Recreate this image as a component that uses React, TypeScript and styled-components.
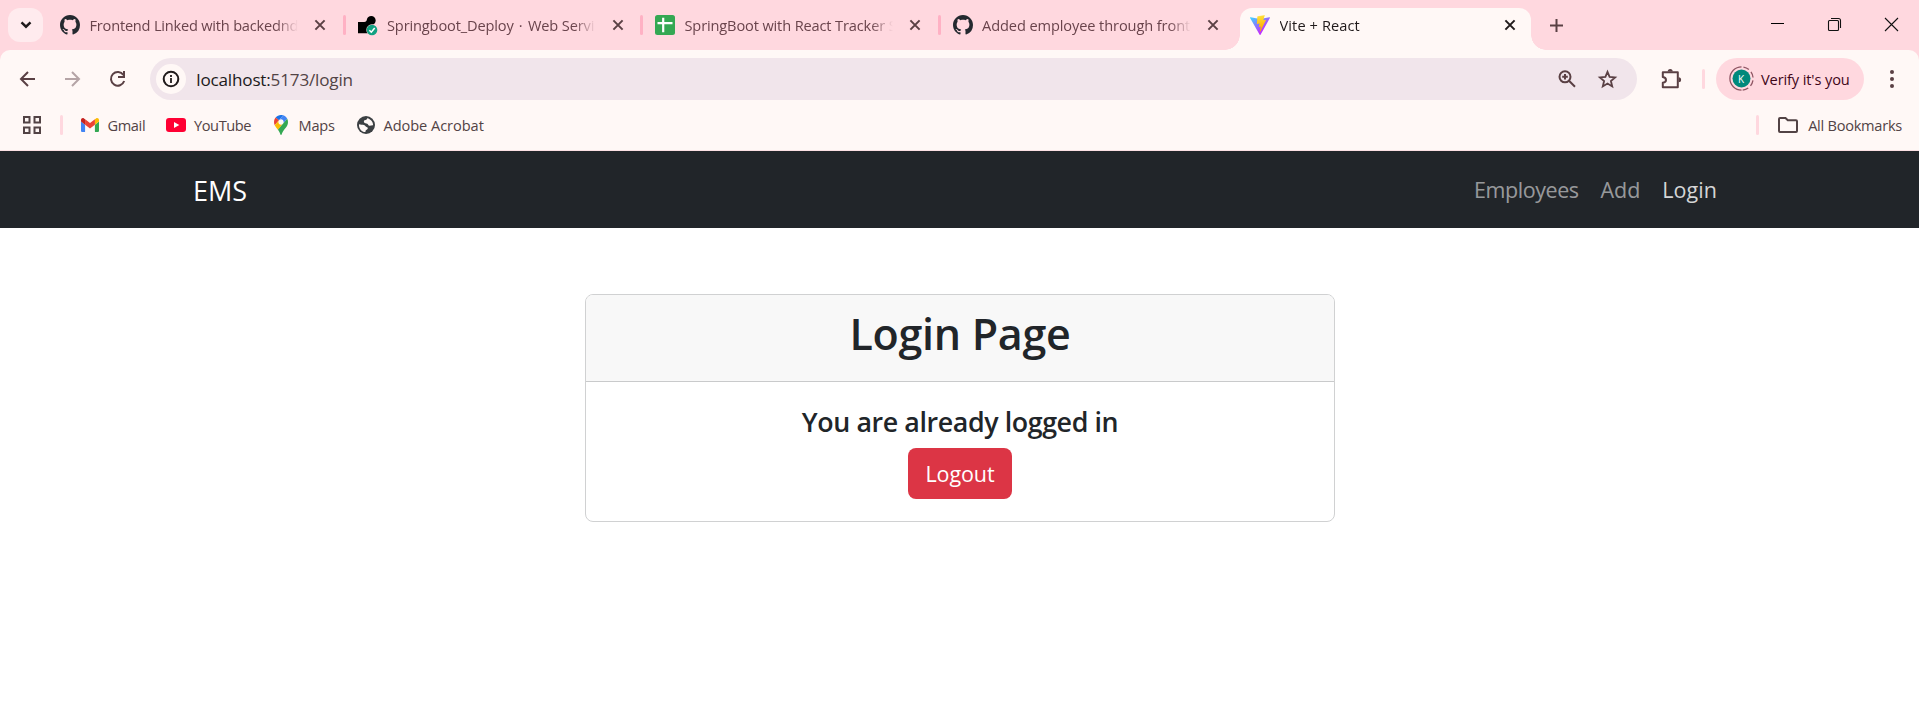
import React from 'react';
import styled, { createGlobalStyle } from 'styled-components';

const color = {
  frame: '#ffd8df',
  frameSoft: '#ffebee',
  divider: '#ffb1c4',
  dividerSoft: '#ffd8df',
  surface: '#fff8f6',
  field: '#f1e5eb',
  icon: '#5a4044',
  iconDim: '#b5a4a6',
  text: '#201a1b',
  tabText: '#6a444c',
  bookmark: '#524345',
  dark: '#212529',
};

const GlobalStyle = createGlobalStyle`
  * { box-sizing: border-box; }
  body {
    margin: 0;
    background: #fff;
    color: ${color.dark};
    font-family: "Open Sans", "Noto Sans", sans-serif;
    overflow: hidden;
  }
  svg { display: block; flex: none; overflow: visible; }
`;

const Label = styled.span<{ $track?: number }>`
  letter-spacing: ${(p) => p.$track ?? 0}px;
  white-space: pre;
`;

/* ---------- tab strip ---------- */

const Chrome = styled.header`
  background: ${color.frame};
`;

const TabStrip = styled.div`
  display: flex;
  align-items: flex-start;
  height: 50px;
  padding: 8px 0 0 8px;
`;

const TabSearch = styled.button`
  display: grid;
  place-items: center;
  width: 35px;
  height: 34px;
  margin-right: 7px;
  padding: 0;
  border: 0;
  border-radius: 12px;
  background: ${color.frameSoft};
`;

const Tab = styled.div<{ $active?: boolean }>`
  position: relative;
  display: flex;
  align-items: center;
  width: 290.5px;
  height: 42px;
  padding: 0 15.5px 8px 10px;
  border-radius: 12px 12px 0 0;
  background: ${(p) => (p.$active ? color.surface : 'transparent')};
  color: ${(p) => (p.$active ? color.text : color.tabText)};

  &::before,
  &::after {
    content: '';
    display: ${(p) => (p.$active ? 'block' : 'none')};
    position: absolute;
    bottom: 0;
    width: 15px;
    height: 15px;
  }
  &::before {
    right: 100%;
    background: radial-gradient(circle at 0 0, transparent 14.5px, ${color.surface} 15px);
  }
  &::after {
    left: 100%;
    background: radial-gradient(circle at 100% 0, transparent 14.5px, ${color.surface} 15px);
  }
`;

const TabTitle = styled.div`
  flex: 1;
  height: 24px;
  margin: 0 17px 0 9.5px;
  overflow: hidden;
  font-size: 14.6px;
  line-height: 24px;
  white-space: nowrap;
  mask-image: linear-gradient(to right, #000 calc(100% - 22px), transparent);
`;

const Dot = styled.span`
  padding: 0 1.8px 0 1.5px;
`;

const TabDivider = styled.span<{ $hidden?: boolean }>`
  width: 3px;
  height: 20px;
  margin: 7px 2px 0;
  border-radius: 2px;
  background: ${(p) => (p.$hidden ? 'transparent' : color.divider)};
`;

const NewTab = styled.div`
  padding: 10.5px 0 0 19px;
`;

const WindowControls = styled.div`
  display: flex;
  gap: 44px;
  margin: 10px 21px 0 auto;
`;

/* ---------- toolbar ---------- */

const Toolbar = styled.div`
  display: flex;
  align-items: center;
  height: 58px;
  padding: 0 17px 0 18px;
  border-radius: 10px 10px 0 0;
  background: ${color.surface};
`;

const NavButtons = styled.div`
  display: flex;
  gap: 25px;
  width: 132px;
`;

const Omnibox = styled.div`
  display: flex;
  align-items: center;
  width: 1487px;
  height: 42px;
  padding: 0 20px 0 6px;
  border-radius: 21px;
  background: ${color.field};
`;

const SiteInfo = styled.span`
  display: grid;
  place-items: center;
  width: 30px;
  height: 30px;
  border-radius: 50%;
  background: ${color.surface};
`;

const Url = styled.div`
  flex: 1;
  margin-left: 10.3px;
  padding-top: 1px;
  font-size: 17.1px;
  line-height: 26px;
  color: ${color.bookmark};

  b {
    font-weight: 400;
    color: ${color.text};
  }
`;

const FieldIcons = styled.div`
  display: flex;
  gap: 20px;
`;

const Extensions = styled.div`
  margin-left: 23px;
`;

const SoftDivider = styled.span<{ $left: number; $right: number }>`
  width: 3px;
  height: 20px;
  margin: 0 ${(p) => p.$right}px 0 ${(p) => p.$left}px;
  border-radius: 2px;
  background: ${color.dividerSoft};
`;

const Profile = styled.button`
  display: flex;
  align-items: center;
  width: 148px;
  height: 42px;
  margin: 0 26px 1px 0;
  padding: 0 0 0 12.5px;
  border: 0;
  border-radius: 21px;
  background: ${color.frame};
  color: #3f0619;
  font: 400 14.6px/24px "Open Sans", sans-serif;
  gap: 7.5px;
`;

const Avatar = styled.span`
  position: relative;
  display: grid;
  place-items: center;
  width: 25px;
  height: 25px;
  color: #fff;
  font-size: 10px;

  svg {
    position: absolute;
    inset: 0;
  }
  span {
    position: relative;
  }
`;

/* ---------- bookmarks ---------- */

const Bookmarks = styled.nav`
  display: flex;
  align-items: center;
  height: 43px;
  padding: 0 17px 9px 23px;
  border-bottom: 1px solid #fbe0e3;
  background: ${color.surface};
  color: ${color.bookmark};
  font-size: 14.6px;
  line-height: 24px;
`;

const Bookmark = styled.a<{ $width?: number; $gap: number }>`
  display: flex;
  align-items: center;
  width: ${(p) => (p.$width ? `${p.$width}px` : 'auto')};
  gap: ${(p) => p.$gap}px;
`;

const Spacer = styled.span`
  flex: 1;
`;

/* ---------- page ---------- */

const Navbar = styled.nav`
  display: flex;
  justify-content: space-between;
  align-items: center;
  height: 77px;
  padding: 0 202px 0 193px;
  background: ${color.dark};
`;

const Brand = styled.a`
  padding-top: 1px;
  color: #fff;
  font-size: 27px;
  line-height: 41px;
`;

const NavLinks = styled.div`
  display: flex;
  gap: 22px;
`;

const NavLink = styled.a<{ $active?: boolean }>`
  color: ${(p) => (p.$active ? 'rgba(255,255,255,.82)' : 'rgba(255,255,255,.55)')};
  font-size: 21.5px;
  line-height: 33px;
`;

const Main = styled.main`
  display: flex;
  justify-content: center;
  padding-top: 66px;
`;

const Card = styled.section`
  width: 750px;
  height: 228px;
  margin-left: 1px;
  border: 1px solid #d0d1d2;
  border-radius: 8px;
  overflow: hidden;
  text-align: center;
`;

const CardHeader = styled.div`
  height: 87px;
  padding-top: 11px;
  border-bottom: 1px solid #c9cacb;
  background: #f8f8f8;
`;

const Title = styled.h2`
  margin: 0;
  font-size: 43px;
  font-weight: 600;
  line-height: 55px;
`;

const CardBody = styled.div`
  display: flex;
  flex-direction: column;
  align-items: center;
  padding-top: 23px;
`;

const Message = styled.h5`
  margin: 0 0 10px;
  font-size: 26.8px;
  font-weight: 600;
  line-height: 33px;
`;

const LogoutButton = styled.button`
  width: 104px;
  height: 51px;
  padding: 0 0 1px;
  border: 0;
  border-radius: 8px;
  background: #dc3545;
  color: #fff;
  font: 400 21.5px/33px "Open Sans", sans-serif;
`;

/* ---------- icons ---------- */

const Cross = ({ tone }: { tone: string }) => (
  <svg width="10" height="10" viewBox="0 0 10 10" stroke={tone} strokeWidth="2" fill="none">
    <path d="M0.4 0.4 9.6 9.6M9.6 0.4 0.4 9.6" />
  </svg>
);

const GitHubMark = () => (
  <svg width="20" height="20" viewBox="0 0 16 16" fill="#24292f">
    <path d="M8 0C3.58 0 0 3.58 0 8c0 3.54 2.29 6.53 5.47 7.59.4.07.55-.17.55-.38 0-.19-.01-.82-.01-1.49-2.01.37-2.53-.49-2.69-.94-.09-.23-.48-.94-.82-1.13-.28-.15-.68-.52-.01-.53.63-.01 1.08.58 1.23.82.72 1.21 1.87.87 2.33.66.07-.52.28-.87.51-1.07-1.78-.2-3.64-.89-3.64-3.95 0-.87.31-1.59.82-2.15-.08-.2-.36-1.02.08-2.12 0 0 .67-.21 2.2.82.64-.18 1.32-.27 2-.27.68 0 1.36.09 2 .27 1.53-1.04 2.2-.82 2.2-.82.44 1.1.16 1.92.08 2.12.51.56.82 1.27.82 2.15 0 3.07-1.87 3.75-3.65 3.95.29.25.54.73.54 1.48 0 1.07-.01 1.93-.01 2.2 0 .21.15.46.55.38A8.013 8.013 0 0 0 16 8c0-4.42-3.58-8-8-8z" />
  </svg>
);

const RenderLogo = () => (
  <svg width="20" height="20" viewBox="0 0 20 20">
    <path d="M0 7h6.200C8 7 8.600 5.900 8.900 4.500 9.300 2.500 11 1 13.200 1c2.500 0 4.500 2 4.500 4.500S15.700 10 13.200 10c-2 0-2.200 1.300-2.200 3v5.300H0z" />
    <circle cx="14" cy="15" r="5.700" fill={color.frame} />
    <circle cx="14" cy="15" r="5.300" fill="#12a182" />
    <path d="m11.400 15.200 1.900 2 3.400-4.200" stroke="#fff" strokeWidth="1.500" fill="none" />
  </svg>
);

const SheetLogo = () => (
  <svg width="20" height="20" viewBox="0 0 20 20">
    <rect width="20" height="20" rx="2.500" fill="#34a853" />
    <path d="M2.500 8.200h15M8.200 2.800v14.400" stroke="#fff" strokeWidth="2.200" />
  </svg>
);

const ViteLogo = () => (
  <svg width="20" height="20" viewBox="0 0 256 257">
    <defs>
      <linearGradient id="viteBody" x1="-.828%" x2="57.636%" y1="7.652%" y2="78.411%">
        <stop offset="0%" stopColor="#41D1FF" />
        <stop offset="100%" stopColor="#BD34FE" />
      </linearGradient>
      <linearGradient id="viteBolt" x1="43.376%" x2="50.316%" y1="2.242%" y2="89.03%">
        <stop offset="0%" stopColor="#FFEA83" />
        <stop offset="8.333%" stopColor="#FFDD35" />
        <stop offset="100%" stopColor="#FFA800" />
      </linearGradient>
    </defs>
    <path fill="url(#viteBody)" d="M255.153 37.938L134.897 252.976c-2.483 4.44-8.862 4.466-11.382.048L.875 37.958c-2.746-4.814 1.371-10.646 6.827-9.67l120.385 21.517a6.537 6.537 0 0 0 2.322-.004l117.867-21.483c5.438-.991 9.574 4.796 6.877 9.62Z" />
    <path fill="url(#viteBolt)" d="M185.432.063L96.44 17.501a3.268 3.268 0 0 0-2.634 3.014l-5.474 92.456a3.268 3.268 0 0 0 3.997 3.378l24.777-5.718c2.318-.535 4.413 1.507 3.936 3.838l-7.361 36.047c-.495 2.426 1.782 4.5 4.151 3.78l15.304-4.649c2.372-.72 4.652 1.36 4.15 3.788l-11.698 56.621c-.732 3.542 3.979 5.473 5.943 2.437l1.313-2.028l72.516-144.72c1.215-2.423-.88-5.186-3.54-4.672l-25.505 4.922c-2.396.462-4.435-1.77-3.759-4.114l16.646-57.705c.677-2.35-1.37-4.583-3.769-4.113Z" />
  </svg>
);

const BackIcon = () => (
  <svg width="20" height="20" viewBox="0 0 20 20" fill="none" stroke={color.icon} strokeWidth="2">
    <path d="M17 10H3.500M10 3 3 10l7 7" />
  </svg>
);

const ForwardIcon = () => (
  <svg width="20" height="20" viewBox="0 0 20 20" fill="none" stroke={color.iconDim} strokeWidth="2">
    <path d="M2 10h13.500M9 3l7 7-7 7" />
  </svg>
);

const ReloadIcon = () => (
  <svg width="20" height="20" viewBox="0 0 20 20" fill="none" stroke={color.icon} strokeWidth="2">
    <path d="M15.400 6A6.800 6.800 0 1 0 16.200 12M16 2v6h-6" />
  </svg>
);

const InfoIcon = () => (
  <svg width="18" height="18" viewBox="0 0 18 18" fill="none" stroke={color.text} strokeWidth="2">
    <circle cx="9" cy="9" r="7.300" />
    <path d="M9 8v5M9 5v2" strokeWidth="1.800" />
  </svg>
);

const ZoomIcon = () => (
  <svg width="20" height="20" viewBox="0 0 20 20" fill="none" stroke={color.icon} strokeWidth="2">
    <circle cx="8" cy="7.800" r="5.500" />
    <path d="m12 11.800 6 6M8 5v5.600M5.200 7.800h5.600" />
  </svg>
);

const StarIcon = () => (
  <svg width="20" height="20" viewBox="0 0 20 20" fill="none" stroke={color.icon} strokeWidth="1.800">
    <path d="m10.500 2.800 2.100 5.100 5.500.5-4.200 3.600 1.300 5.400-4.700-2.900-4.700 2.900 1.300-5.400-4.200-3.600 5.500-.5z" />
  </svg>
);

const PuzzleIcon = () => (
  <svg width="22" height="22" viewBox="0 0 22 22">
    <path
      d="M2.800 4.200h15v15h-15v-4.400q3.200-.6 3.200-2.900t-3.200-2.900z"
      fill="none"
      stroke={color.icon}
      strokeWidth="2"
      strokeLinejoin="round"
    />
    <path d="M7.700 3.500a2.500 2.500 0 0 1 5 0zM18.600 9.300a2.500 2.500 0 0 1 0 5z" fill={color.icon} />
  </svg>
);

const AppsIcon = () => (
  <svg width="18" height="18" viewBox="0 0 18 18" fill="none" stroke={color.bookmark} strokeWidth="2">
    <path d="M1 1h5.500v5.500H1zM11.500 1H17v5.500h-5.500zM1 11.500h5.500V17H1zM11.500 11.500H17V17h-5.500z" />
  </svg>
);

const GmailLogo = () => (
  <svg width="18" height="14" viewBox="52 42 88 66" preserveAspectRatio="none">
    <path fill="#4285f4" d="M58 108h14V74L52 59v43c0 3.320 2.690 6 6 6" />
    <path fill="#34a853" d="M120 108h14c3.320 0 6-2.690 6-6V59l-20 15" />
    <path fill="#fbbc04" d="M120 48v26l20-15v-8c0-7.420-8.470-11.650-14.400-7.200" />
    <path fill="#ea4335" d="M72 74V48l24 18 24-18v26L96 92" />
    <path fill="#c5221f" d="M52 51v8l20 15V48l-5.600-4.200c-5.940-4.450-14.400-.22-14.400 7.200" />
  </svg>
);

const YouTubeLogo = () => (
  <svg width="20" height="14" viewBox="0 0 20 14">
    <rect width="20" height="14" rx="3" fill="#ff0033" />
    <path d="m8 4 5.300 3L8 10z" fill="#fff" />
  </svg>
);

const MapsLogo = () => (
  <svg width="14" height="20" viewBox="0 0 92.3 132.3">
    <path fill="#1a73e8" d="M60.200 2.200C55.800.8 51 0 46.100 0 32 0 19.300 6.400 10.800 16.500l21.800 18.300z" />
    <path fill="#ea4335" d="M10.800 16.500C4.100 24.500 0 34.900 0 46.100c0 8.700 1.700 15.700 4.600 22l28-33.300z" />
    <path fill="#4285f4" d="M46.200 28.500c9.800 0 17.700 7.900 17.700 17.700 0 4.300-1.600 8.300-4.200 11.400 0 0 13.900-16.600 27.500-32.700-5.600-10.800-15.300-19-27-22.700L32.600 34.800c3.300-3.800 8.100-6.300 13.600-6.300" />
    <path fill="#fbbc04" d="M46.200 63.800c-9.800 0-17.700-7.900-17.700-17.700 0-4.300 1.500-8.300 4.100-11.300l-28 33.300c4.800 10.600 12.800 19.200 21 29.900l34.100-40.500c-3.300 3.900-8.100 6.300-13.500 6.300" />
    <path fill="#34a853" d="M59.100 109.200c15.400-24.100 33.300-35 33.300-63 0-7.700-1.900-14.900-5.200-21.300L25.600 98c2.600 3.400 5.300 7.300 7.900 11.300 9.400 14.500 6.800 23.100 12.800 23.100s3.400-8.700 12.800-23.200" />
  </svg>
);

const GlobeIcon = () => (
  <svg width="18" height="18" viewBox="0 0 18 18">
    <circle cx="9" cy="9" r="9" fill="#3c4043" />
    <path
      d="M10.200 2.200C9.800 3.700 9 4 7.700 4.300 6.600 4.600 6.800 5.800 7.200 6.600c.5 1 2 .8 3 1.200 1.200.5 1 1.900 2.300 2 1.200.1 2.400-.9 3.600-.6C16.200 5.900 13.700 2.900 10.200 2.200z"
      fill={color.surface}
    />
    <path
      d="M2 8.200c1.700.5 3.500.4 5 .8 1.400.4 1.300 1.700 2.500 2 .9.300 1.500.8 1.200 1.700-.3 1-1.700.9-2 1.800-.2.6-.2 1.100-.3 1.600C4.600 15.800 1.600 12.600 2 8.200z"
      fill={color.surface}
    />
  </svg>
);

const FolderIcon = () => (
  <svg width="20" height="16" viewBox="0 0 20 16" fill="none" stroke={color.bookmark} strokeWidth="2">
    <path d="M2 1h5.500l2.300 2.300H18a1 1 0 0 1 1 1V14a1 1 0 0 1-1 1H2a1 1 0 0 1-1-1V2a1 1 0 0 1 1-1z" />
  </svg>
);

type TabData = { id: string; icon: React.ReactNode; title: React.ReactNode; track: number; active?: boolean };

const tabs: TabData[] = [
  { id: 'linked', icon: <GitHubMark />, title: 'Frontend Linked with backednd', track: -0.21 },
  {
    id: 'deploy',
    icon: <RenderLogo />,
    title: (
      <>
        Springboot_Deploy<Dot> · </Dot>Web Servi
      </>
    ),
    track: -0.14,
  },
  { id: 'sheet', icon: <SheetLogo />, title: 'SpringBoot with React Tracker S', track: -0.14 },
  { id: 'added', icon: <GitHubMark />, title: 'Added employee through fronte', track: -0.1 },
  { id: 'vite', icon: <ViteLogo />, title: 'Vite + React', track: 0.1, active: true },
];

export default function App() {
  return (
    <>
      <GlobalStyle />
      <Chrome>
        <TabStrip>
          <TabSearch aria-label="Search tabs">
            <svg width="12" height="8" viewBox="0 0 12 8" fill="none" stroke={color.text} strokeWidth="2.4">
              <path d="m1.500 1.300 4.500 4.400 4.500-4.400" />
            </svg>
          </TabSearch>
          {tabs.map((tab, i) => (
            <React.Fragment key={tab.id}>
              <Tab $active={tab.active}>
                {tab.icon}
                <TabTitle>
                  <Label $track={tab.track}>{tab.title}</Label>
                </TabTitle>
                <Cross tone={tab.active ? color.text : color.icon} />
              </Tab>
              {i < 4 && <TabDivider $hidden={i === 3} />}
            </React.Fragment>
          ))}
          <NewTab>
            <svg width="13" height="13" viewBox="0 0 13 13" stroke={color.icon} strokeWidth="2">
              <path d="M6.500 0v13M0 6.500h13" />
            </svg>
          </NewTab>
          <WindowControls>
            <svg width="13" height="13" viewBox="0 0 13 13" stroke="#000" strokeWidth="1">
              <path d="M0 5.500h13" />
            </svg>
            <svg width="13" height="13" viewBox="0 0 13 13" fill="none" stroke="#111" strokeWidth="1.100">
              <rect x=".5" y="2.500" width="10" height="10" rx="1" />
              <path d="M3 .5h7.500q2 0 2 2V10" />
            </svg>
            <svg width="13" height="13" viewBox="0 0 13 13" stroke="#111" strokeWidth="1.100">
              <path d="m0 0 13 13M13 0 0 13" />
            </svg>
          </WindowControls>
        </TabStrip>

        <Toolbar>
          <NavButtons>
            <BackIcon />
            <ForwardIcon />
            <ReloadIcon />
          </NavButtons>
          <Omnibox>
            <SiteInfo>
              <InfoIcon />
            </SiteInfo>
            <Url>
              <Label $track={-0.18}>
                <b>localhost:</b>5173/login
              </Label>
            </Url>
            <FieldIcons>
              <ZoomIcon />
              <StarIcon />
            </FieldIcons>
          </Omnibox>
          <Extensions>
            <PuzzleIcon />
          </Extensions>
          <SoftDivider $left={20} $right={11} />
          <Profile>
            <Avatar>
              <svg width="25" height="25" viewBox="0 0 25 25">
                <circle cx="12.500" cy="12.500" r="9" fill="#00897b" />
                <path d="M12.500 24.100A11.600 11.600 0 0 1 12.500 .9" fill="none" stroke="#8f5563" strokeWidth="1.300" />
                <path
                  d="M12.500 .9A11.600 11.600 0 0 1 12.500 24.100"
                  fill="none"
                  stroke="#8f5563"
                  strokeWidth="1.300"
                  strokeDasharray="6 3"
                  strokeDashoffset="-2"
                />
              </svg>
              <span>K</span>
            </Avatar>
            <Label $track={-0.12}>Verify it's you</Label>
          </Profile>
          <svg width="4" height="18" viewBox="0 0 4 18" fill={color.icon}>
            <circle cx="2" cy="2" r="2" />
            <circle cx="2" cy="9" r="2" />
            <circle cx="2" cy="16" r="2" />
          </svg>
        </Toolbar>

        <Bookmarks>
          <AppsIcon />
          <SoftDivider $left={19} $right={18} />
          <Bookmark $width={85} $gap={8.5}>
            <GmailLogo />
            <Label $track={-0.38}>Gmail</Label>
          </Bookmark>
          <Bookmark $width={107.5} $gap={8}>
            <YouTubeLogo />
            <Label $track={-0.42}>YouTube</Label>
          </Bookmark>
          <Bookmark $width={83.5} $gap={11}>
            <MapsLogo />
            <Label $track={-0.23}>Maps</Label>
          </Bookmark>
          <Bookmark $gap={8.5}>
            <GlobeIcon />
            <Label $track={-0.06}>Adobe Acrobat</Label>
          </Bookmark>
          <Spacer />
          <SoftDivider $left={0} $right={19} />
          <Bookmark $gap={10.5}>
            <FolderIcon />
            <Label $track={-0.26}>All Bookmarks</Label>
          </Bookmark>
        </Bookmarks>
      </Chrome>

      <Navbar>
        <Brand>
          <Label>EMS</Label>
        </Brand>
        <NavLinks>
          <NavLink>
            <Label $track={-0.44}>Employees</Label>
          </NavLink>
          <NavLink>
            <Label $track={-0.1}>Add</Label>
          </NavLink>
          <NavLink $active>
            <Label $track={0.07}>Login</Label>
          </NavLink>
        </NavLinks>
      </Navbar>

      <Main>
        <Card>
          <CardHeader>
            <Title>
              <Label $track={-0.27}>Login Page</Label>
            </Title>
          </CardHeader>
          <CardBody>
            <Message>
              <Label $track={-0.4}>You are already logged in</Label>
            </Message>
            <LogoutButton>
              <Label $track={-0.1}>Logout</Label>
            </LogoutButton>
          </CardBody>
        </Card>
      </Main>
    </>
  );
}
